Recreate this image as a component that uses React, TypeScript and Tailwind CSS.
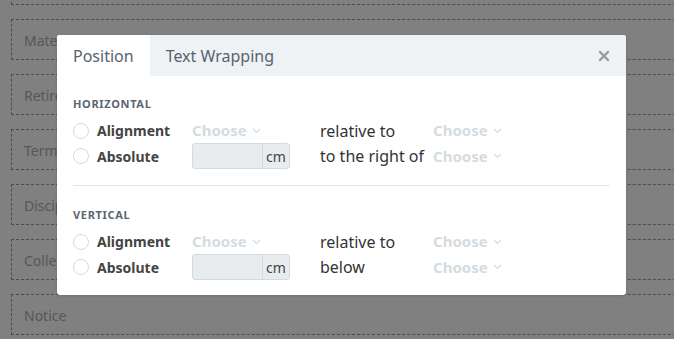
import React from "react";

const bgBoxes = ["", "Material", "Retirement", "Termination", "Discipline", "Collective", "Notice"];

function Radio() {
  return <span className="block w-4 h-4 rounded-full border border-[#d6dadd] bg-white" />;
}

function Choose() {
  return (
    <span className="flex items-center gap-[5px] text-[15px] font-bold text-[#d4dce2] leading-none">
      Choose
      <svg width="9" height="6" viewBox="0 0 9 6" fill="none" stroke="#d4dce2" strokeWidth="1.2">
        <path d="M1 1l3.5 3.5L8 1" />
      </svg>
    </span>
  );
}

function CmInput() {
  return (
    <div className="flex w-[98px] h-[26px] rounded-[3px] border border-[#d5dadd] bg-[#e9ecef] overflow-hidden">
      <div className="flex-1" />
      <div className="w-[27px] border-l border-[#d5dadd] flex items-center justify-center text-[14px] text-[#444]">cm</div>
    </div>
  );
}

function Section({ title, rel2 }: { title: string; rel2: string }) {
  return (
    <div>
      <div className="text-[11px] font-bold tracking-[0.06em] text-[#5b6670] leading-[15px]">{title}</div>
      <div className="mt-[8px] grid grid-cols-[24px_95px_128px_113px_auto] grid-rows-[23px_26px] gap-y-[1px] items-center">
        <Radio />
        <span className="text-[14px] font-bold text-[#444]">Alignment</span>
        <Choose />
        <span className="text-[16px] text-[#333]">relative to</span>
        <Choose />
        <Radio />
        <span className="text-[14px] font-bold text-[#444]">Absolute</span>
        <CmInput />
        <span className="text-[16px] text-[#333]">{rel2}</span>
        <Choose />
      </div>
    </div>
  );
}

export default function App() {
  return (
    <div
      className="relative w-[674px] h-[339px] overflow-hidden bg-[#808080]"
      style={{ fontFamily: '"Noto Sans", "Open Sans", sans-serif' }}
    >
      <div className="flex flex-col gap-[14px] mt-[-36px] ml-[11px]">
        {bgBoxes.map((t, i) => (
          <div
            key={i}
            className="w-[700px] h-[41px] border border-dashed border-[#4d4d4d] flex items-center pl-3 pt-[2px] text-[14px] text-[#575757]"
          >
            {t}
          </div>
        ))}
      </div>

      <div className="absolute left-[57px] top-[35px] w-[569px] h-[260px] bg-white rounded-[3px] overflow-hidden shadow-[0_1px_3px_rgba(0,0,0,0.15)]">
        <div className="flex h-[41px] bg-[#eef2f5] items-stretch">
          <div className="bg-white px-4 flex items-center text-[16px] text-[#56636e]">Position</div>
          <div className="px-4 flex items-center text-[16px] text-[#56636e]">Text Wrapping</div>
          <div className="flex-1" />
          <div className="pr-[16px] flex items-center">
            <svg width="12" height="12" viewBox="0 0 12 12" stroke="#9a9a9a" strokeWidth="2.4" strokeLinecap="round">
              <path d="M2 2l8 8M10 2l-8 8" />
            </svg>
          </div>
        </div>
        <div className="px-4 pt-[20px]">
          <Section title="HORIZONTAL" rel2="to the right of" />
          <div className="mt-[16px] h-px bg-[#e6e6e6]" />
          <div className="pt-[21px]">
            <Section title="VERTICAL" rel2="below" />
          </div>
        </div>
      </div>
    </div>
  );
}
